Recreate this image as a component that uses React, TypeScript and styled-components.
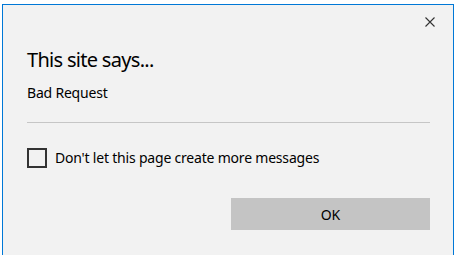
import React from 'react'
import styled, { createGlobalStyle } from 'styled-components'

const GlobalStyle = createGlobalStyle`
  html, body {
    margin: 0;
    padding: 0;
    background: #ffffff;
    overflow: hidden;
  }
  body {
    font-family: "Noto Sans", "Open Sans", Arial, sans-serif;
  }
`

const App = () => {
  return (
    <>
      <GlobalStyle />
      <SPage>
        <SDialog>
          <STopBar>
            <SCloseButton aria-label="Close">
              <svg width="10" height="10" viewBox="0 0 10 10">
                <path d="M0.5 0.5 L9.5 9.5 M9.5 0.5 L0.5 9.5" stroke="#333" strokeWidth="1.1" />
              </svg>
            </SCloseButton>
          </STopBar>
          <STitle>This site says...</STitle>
          <SMessage>Bad Request</SMessage>
          <SDivider />
          <SCheckRow>
            <SCheckBox />
            <SCheckLabel>Don't let this page create more messages</SCheckLabel>
          </SCheckRow>
          <SFooter>
            <SOkButton>OK</SOkButton>
          </SFooter>
        </SDialog>
      </SPage>
    </>
  )
}

const SPage = styled.div`
  width: 454px;
  height: 255px;
  padding: 4px 0 0 2px;
  box-sizing: border-box;
  overflow: hidden;
`

const SDialog = styled.div`
  width: 452px;
  height: 260px;
  box-sizing: border-box;
  background: #f2f2f2;
  border: 1px solid #0078d7;
  border-bottom: none;
  padding: 0 23px 0 24px;
  display: flex;
  flex-direction: column;
`

const STopBar = styled.div`
  display: flex;
  justify-content: flex-end;
  padding-top: 7px;
  margin-right: -10px;
`

const SCloseButton = styled.button`
  width: 20px;
  height: 20px;
  padding: 0;
  border: none;
  background: transparent;
  display: flex;
  align-items: center;
  justify-content: center;
`

const STitle = styled.h1`
  margin: 15px 0 0 0;
  font-size: 20px;
  line-height: 26px;
  font-weight: 400;
  color: #000;
  letter-spacing: -0.7px;
`

const SMessage = styled.div`
  margin-top: 10px;
  font-size: 14px;
  line-height: 20px;
  color: #000;
  letter-spacing: -0.2px;
`

const SDivider = styled.div`
  margin-top: 19px;
  height: 1px;
  background: #c6c6c6;
`

const SCheckRow = styled.div`
  margin-top: 25px;
  display: flex;
  align-items: center;
  gap: 8px;
`

const SCheckBox = styled.span`
  width: 20px;
  height: 20px;
  box-sizing: border-box;
  border: 2px solid #333;
  flex-shrink: 0;
`

const SCheckLabel = styled.span`
  font-size: 14px;
  line-height: 20px;
  color: #000;
  letter-spacing: -0.2px;
`

const SFooter = styled.div`
  margin-top: 30px;
  display: flex;
  justify-content: flex-end;
`

const SOkButton = styled.button`
  width: 199px;
  height: 32px;
  border: none;
  background: #c4c4c4;
  font-family: "Noto Sans", "Open Sans", Arial, sans-serif;
  font-size: 14px;
  color: #000;
  padding: 0;
`

export default App
